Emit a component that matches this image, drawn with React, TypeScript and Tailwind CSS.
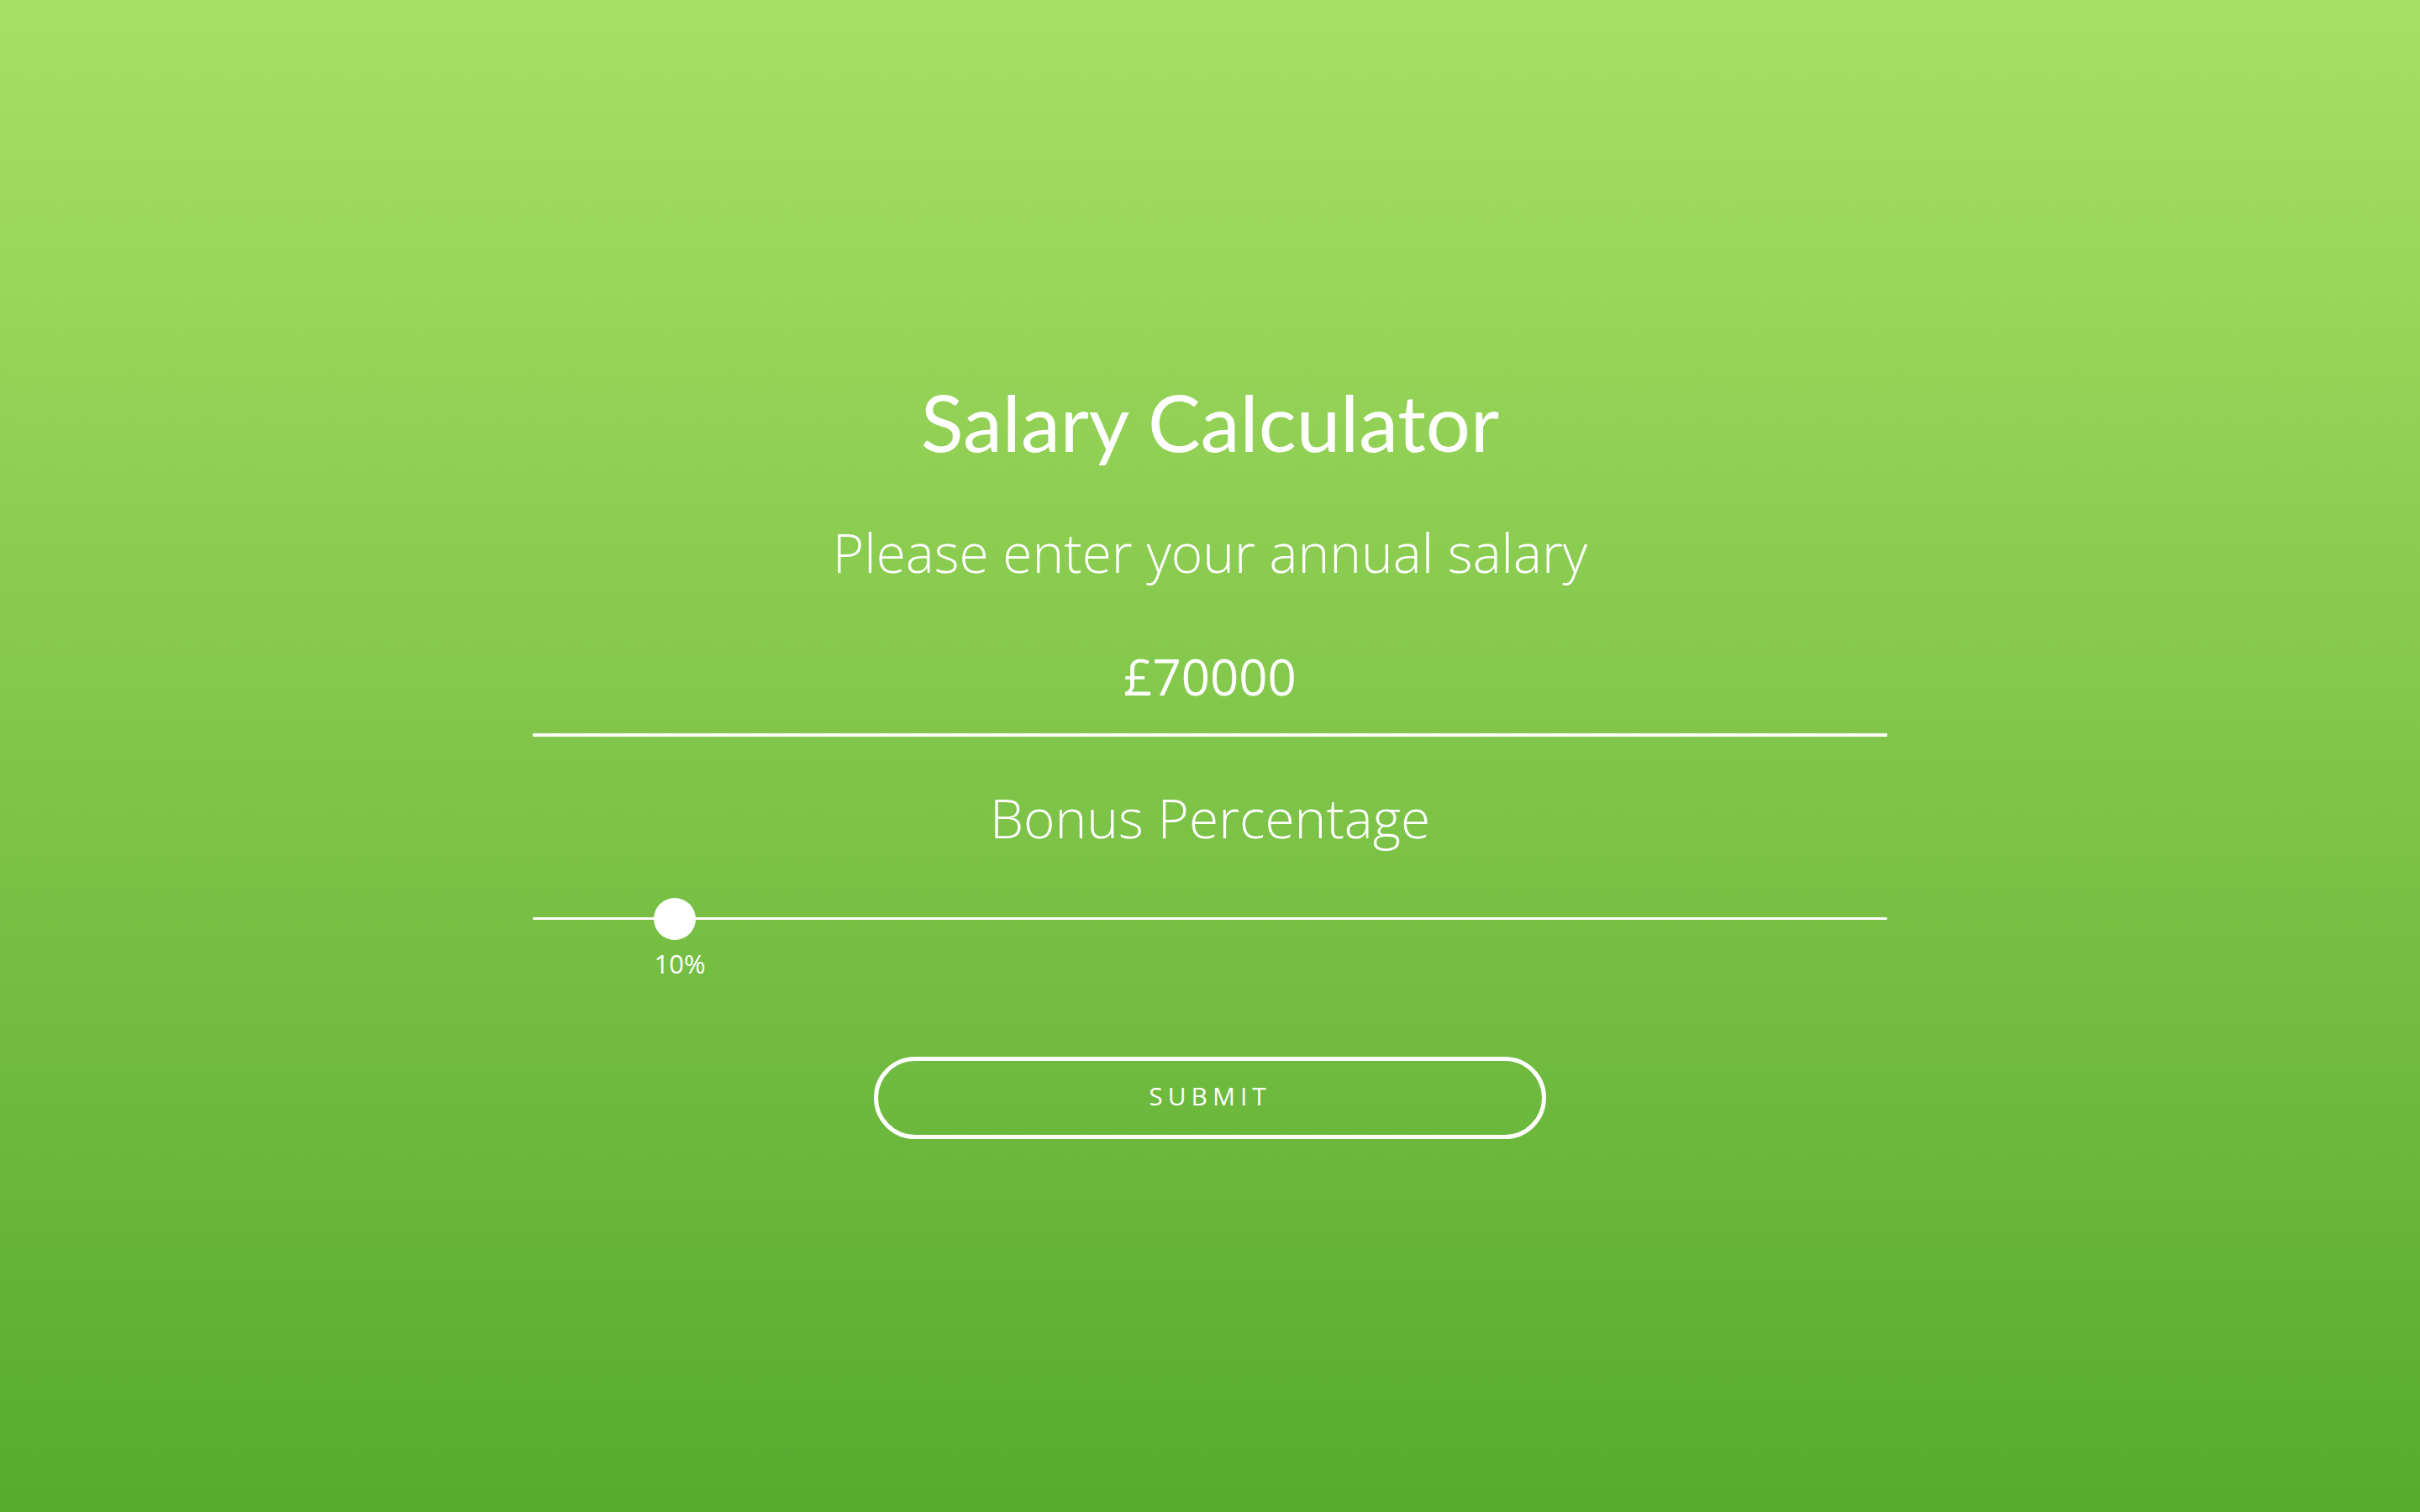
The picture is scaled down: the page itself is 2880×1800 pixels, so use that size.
import React from "react";

export default function App() {
  const pct = 10;
  return (
    <div className="w-full h-screen bg-gradient-to-b from-[#a8e063] to-[#56ab2f] flex items-center justify-center text-white font-['Open_Sans',sans-serif]">
      <div className="w-[1612px] flex flex-col items-center">
        <h1 className="text-[94px] leading-[115px] font-normal text-center font-['Lato','Open_Sans',sans-serif]">
          Salary Calculator
        </h1>
        <p className="mt-[55px] text-[64px] leading-[88px] font-light text-center">
          Please enter your annual salary
        </p>
        <div className="mt-[63px] w-full border-b-[4px] border-white pb-[28px] text-center text-[60px] leading-[80px] font-normal">
          £70000
        </div>
        <p className="mt-[53px] text-[64px] leading-[88px] font-light text-center">
          Bonus Percentage
        </p>
        <div className="mt-[51px] w-full relative h-[50px]">
          <div className="absolute left-0 right-0 top-[23px] h-[3px] bg-white rounded-full" />
          <div
            className="absolute top-0 w-[50px] h-[50px] rounded-full bg-white"
            style={{ left: `${144 + (pct - 10) * 15.62}px` }}
          />
        </div>
        <div className="w-full relative h-[40px] mt-[8px]">
          <span className="absolute top-0 left-[125px] w-[100px] text-center text-[31px] leading-[40px] font-medium">
            {pct}%
          </span>
        </div>
        <button className="mt-[91px] w-[800px] h-[98px] rounded-full border-[5px] border-white bg-transparent text-white text-[30px] tracking-[0.2em] font-medium flex items-center justify-center pb-[5px]">
          SUBMIT
        </button>
      </div>
    </div>
  );
}
